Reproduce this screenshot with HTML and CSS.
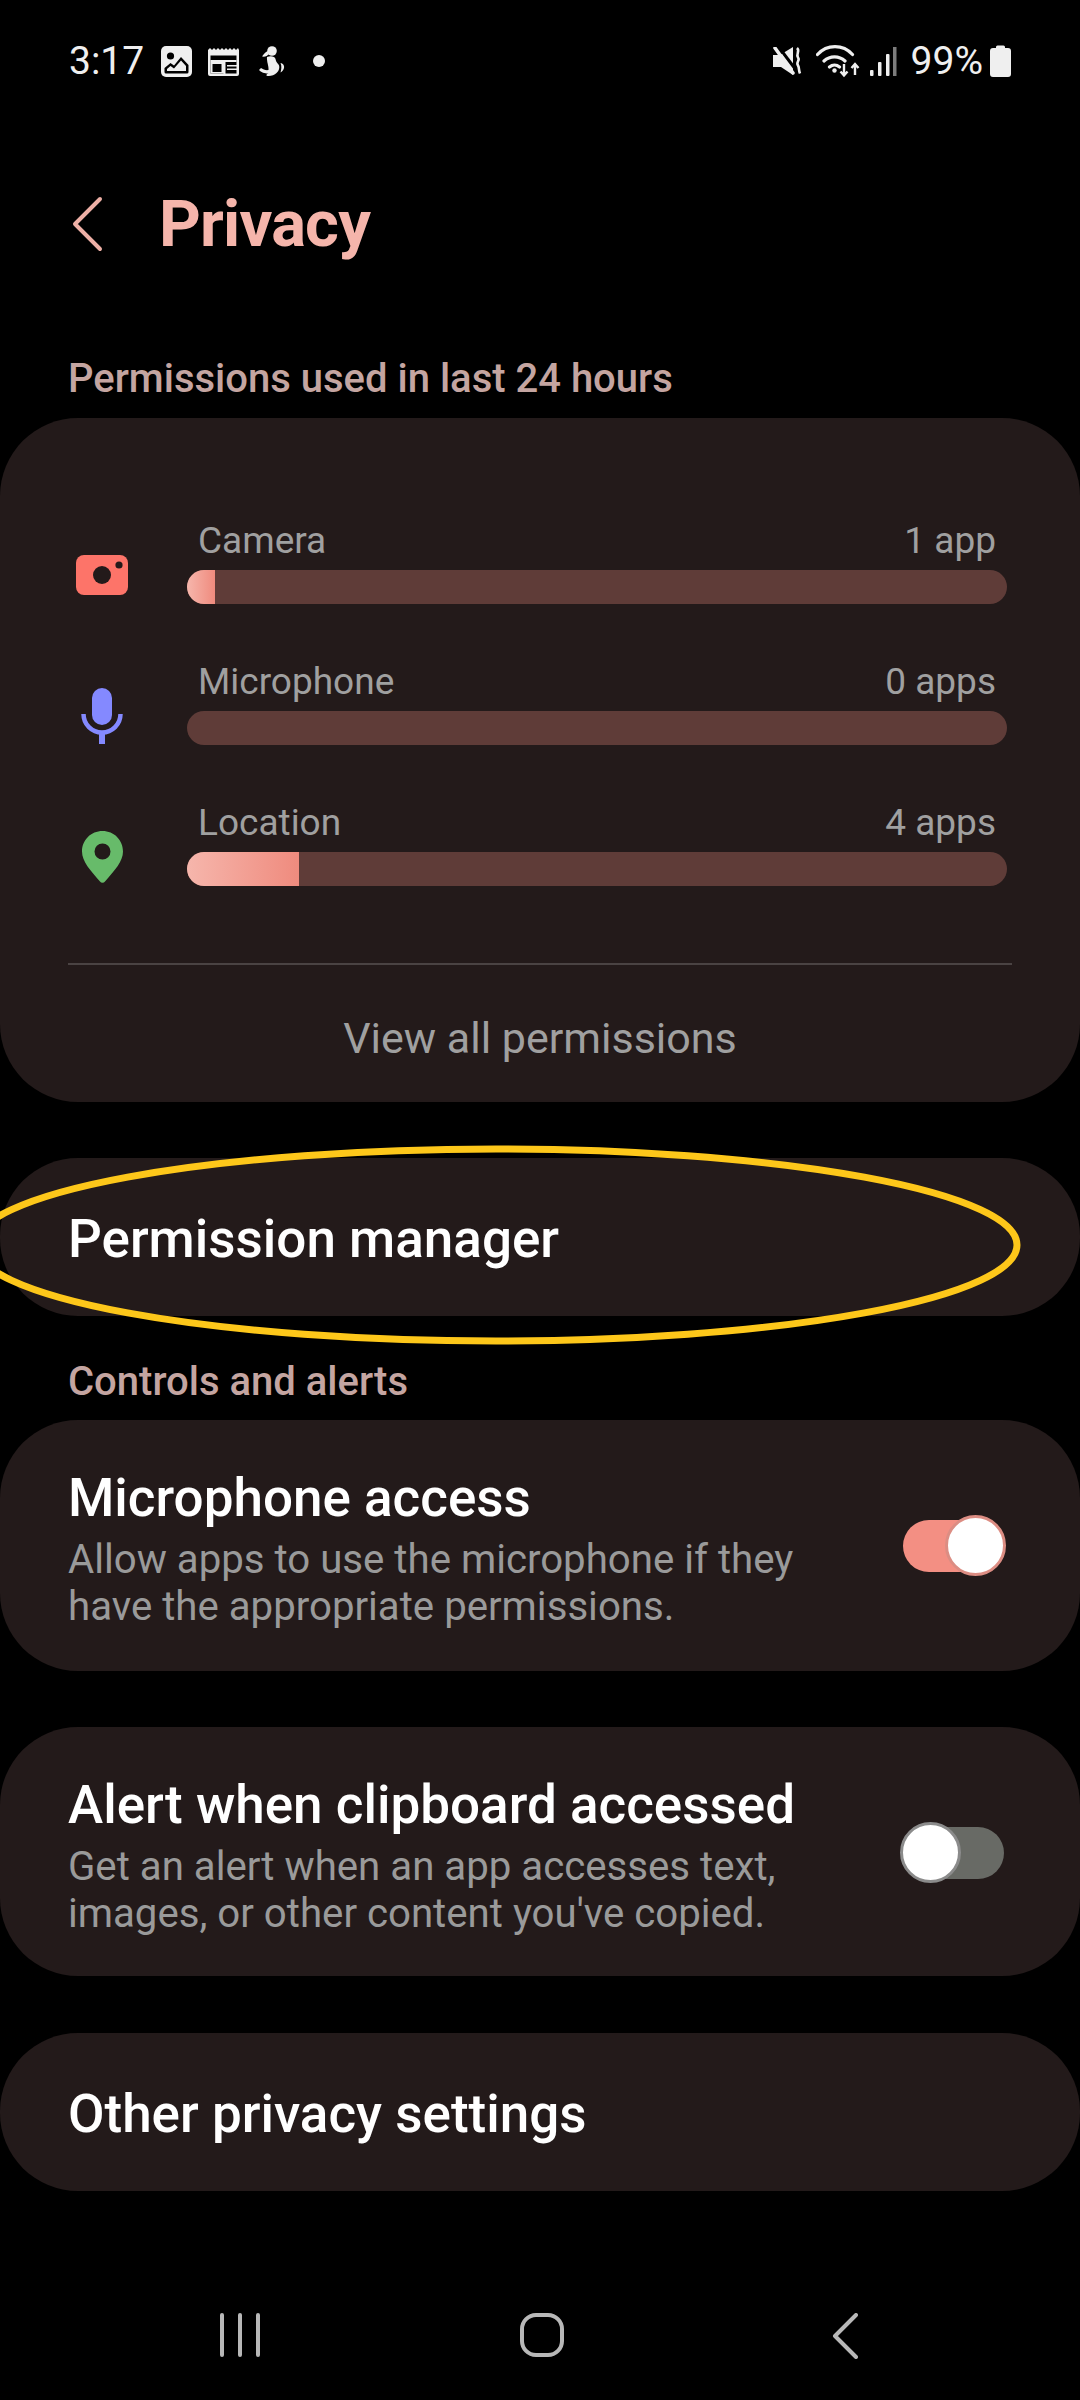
FILE: index.html
```
<!DOCTYPE html>
<html lang="en">
<head>
<meta charset="utf-8">
<title>Privacy</title>
<link rel="stylesheet" href="styles.css">
</head>
<body>
<div class="page">
  <div class="status">
    <div class="status-left">
      <span class="time">3:17</span>
      <svg class="ic-img" viewBox="0 0 31 31"><rect width="31" height="31" rx="5" fill="#efefef"/><circle cx="9.500" cy="10" r="3.600" fill="#000"/><path d="M3.500 26v-4l6-5 3.500 2.500L20 11l7.500 8v7a1.500 1.500 0 0 1-1.500 1.500H5a1.500 1.500 0 0 1-1.500-1.500Z" fill="#000"/><path d="M6 25v-2l3.500-3 3.500 2.500L20 14.500l5 5.500v5Z" fill="#efefef"/></svg>
      <svg class="ic-cal" viewBox="0 0 33 30"><path d="M1 4l2-2 2 2 2-2 2 2 2-2 2 2 2-2 2 2 2-2 2 2 2-2 2 2 2-2 2 2 2-2 1 2v24a2 2 0 0 1-2 2H3a2 2 0 0 1-2-2Z" fill="#efefef"/><rect x="3.500" y="9.500" width="26" height="18" fill="#000"/><path d="M3.500 14h26v2h-26Z M16.500 14h2v14h-2Z M20 19h10v1.500H20Z M20 22.500h10V24H20Z M3.500 16h13v11.500h-13Z" fill="#efefef"/><rect x="5.500" y="18" width="9" height="8" fill="#000"/></svg>
      <svg class="ic-fig" viewBox="0 0 28 31"><circle cx="15" cy="5" r="4.800" fill="#efefef"/><path d="M11 5C8 6 6.500 8.500 5 10.500c3 .5 5.500-.5 7-2.500Z" fill="#efefef"/><path d="M10 11c3-1.500 8-1 8.500 2 .5 2 .5 3 3 5.500 1.500 2 1 6-2 8.500-2 2-6 3.500-9 3-2-.5-1-2 1-2.500-2 0-6 0-9.500-3.500l2-2c2 1.500 5 2.500 7.500 2 .5-4-2-8-1.500-13.500Z" fill="#efefef"/><path d="M23.500 17c3 .5 4 3 3.500 5-.5 2-2 4-3.500 4.500.8-3 1.500-6 0-9.500Z" fill="#efefef"/></svg>
      <span class="dot"></span>
    </div>
    <div class="status-right">
      <svg class="ic-mute" viewBox="0 0 30 29"><path d="M1 8h7L21 0v28L9 20H1Z" fill="#efefef"/><path d="M6-1l18 24" stroke="#000" stroke-width="3" fill="none"/><path d="M3 1l18 25" stroke="#efefef" stroke-width="3.500" stroke-linecap="round" fill="none"/><path d="M25 1c3.500 3-1.500 6 1 9.500 2.500 3-2.500 4.500 0 8 1.500 2.500.5 5 2 8" fill="none" stroke="#efefef" stroke-width="2.600"/></svg>
      <svg class="ic-wifi" viewBox="0 0 46 33"><path d="M1.500 9.500C11-1 27-1 36.500 9.500M8 16c6-5.500 15-5.500 21 0M13.500 22c3-2.500 7-2.500 10 0" fill="none" stroke="#efefef" stroke-width="3.200" stroke-linecap="round"/><circle cx="18.500" cy="25.500" r="2.200" fill="#efefef"/><path d="M28 19v11M24.500 26.500l3.500 4 3.500-4M39 30V19M35.500 23l3.500-4 3.500 4" fill="none" stroke="#efefef" stroke-width="2.400"/></svg>
      <svg class="ic-sig" viewBox="0 0 27 29"><rect x="0" y="23" width="3.500" height="6" rx="1" fill="#efefef"/><rect x="8" y="15" width="3.500" height="14" rx="1" fill="#efefef"/><rect x="16" y="7" width="3.500" height="22" rx="1" fill="#efefef"/><rect x="23" y="0" width="3.500" height="29" fill="#7c7c7c"/></svg>
      <span class="pct">99%</span>
      <svg class="ic-bat" viewBox="0 0 21 32"><path d="M6 2a1.500 1.500 0 0 1 1.500-1.500h6A1.500 1.500 0 0 1 15 2v1h3a3 3 0 0 1 3 3v23a3 3 0 0 1-3 3H3a3 3 0 0 1-3-3V6a3 3 0 0 1 3-3h3Z" fill="#efefef"/></svg>
    </div>
  </div>

  <header class="header">
    <svg class="back" viewBox="0 0 32 56"><path d="M28 3L3 28l25 25" fill="none" stroke="#eeb0a6" stroke-width="4" stroke-linecap="round" stroke-linejoin="round"/></svg>
    <h1 class="title">Privacy</h1>
  </header>

  <h2 class="section first">Permissions used in last 24 hours</h2>

  <section class="card usage">
    <div class="rows">
      <div class="row">
        <div class="row-icon">
          <svg class="ic-camera" viewBox="0 0 52 40"><rect width="52" height="40" rx="8" fill="#fd7469"/><circle cx="26" cy="20" r="9" fill="#231a1a"/><circle cx="43" cy="10" r="3.600" fill="#231a1a"/></svg>
        </div>
        <div class="row-body">
          <div class="labels"><span>Camera</span><span>1 app</span></div>
          <div class="bar"><div class="fill fill-camera"></div></div>
        </div>
      </div>
      <div class="row">
        <div class="row-icon">
          <svg class="ic-mic" viewBox="0 0 42 56"><rect x="11" y="0" width="20" height="37" rx="10" fill="#8489ff"/><path d="M2.500 26a18.500 18.500 0 0 0 37 0" fill="none" stroke="#8489ff" stroke-width="4.500"/><rect x="18" y="44" width="6" height="12" fill="#8489ff"/></svg>
        </div>
        <div class="row-body">
          <div class="labels"><span>Microphone</span><span>0 apps</span></div>
          <div class="bar"></div>
        </div>
      </div>
      <div class="row">
        <div class="row-icon">
          <svg class="ic-pin" viewBox="0 0 41 52"><path fill-rule="evenodd" d="M20.500 0C32 0 41 9 41 20.500c0 10-8.500 19-18 30a3 3 0 0 1-5 0C8.500 39.500 0 30.500 0 20.500 0 9 9 0 20.500 0Zm0 12.500a8 8 0 1 0 0 16 8 8 0 0 0 0-16Z" fill="#67bb6a"/></svg>
        </div>
        <div class="row-body">
          <div class="labels"><span>Location</span><span>4 apps</span></div>
          <div class="bar"><div class="fill fill-location"></div></div>
        </div>
      </div>
    </div>
    <div class="divider"></div>
    <div class="view-all">View all permissions</div>
  </section>

  <section class="card plain pm"><span class="item">Permission manager</span></section>

  <h2 class="section second">Controls and alerts</h2>

  <section class="card toggle-card">
    <div class="toggle-text">
      <div class="item">Microphone access</div>
      <p class="sub">Allow apps to use the microphone if they have the appropriate permissions.</p>
    </div>
    <div class="switch on"><span class="knob"></span></div>
  </section>

  <section class="card toggle-card next">
    <div class="toggle-text">
      <div class="item">Alert when clipboard accessed</div>
      <p class="sub">Get an alert when an app accesses text, images, or other content you've copied.</p>
    </div>
    <div class="switch off"><span class="knob"></span></div>
  </section>

  <section class="card plain last"><span class="item">Other privacy settings</span></section>

  <nav class="nav">
    <svg class="nav-recent" viewBox="0 0 42 44"><path d="M2 2v40M20 2v40M38 2v40" stroke="#b8b8b8" stroke-width="4" stroke-linecap="round" fill="none"/></svg>
    <svg class="nav-home" viewBox="0 0 44 44"><rect x="2" y="2" width="40" height="40" rx="14" fill="none" stroke="#b8b8b8" stroke-width="4"/></svg>
    <svg class="nav-back" viewBox="0 0 26 46"><path d="M24 2L3 23l21 21" fill="none" stroke="#b8b8b8" stroke-width="4" stroke-linecap="round" stroke-linejoin="round"/></svg>
  </nav>

  <svg class="circle" viewBox="0 0 1080 300"><ellipse cx="496" cy="145" rx="521" ry="96" fill="none" stroke="#fdc71a" stroke-width="7"/></svg>
</div>
</body>
</html>
```

FILE: styles.css
```
* { box-sizing: border-box; }
html, body { margin: 0; padding: 0; background: #000; }
.page {
  position: relative;
  width: 1080px;
  height: 2400px;
  overflow: hidden;
  background: #000;
  font-family: Roboto, "Noto Sans", sans-serif;
  display: flex;
  flex-direction: column;
}
.status {
  height: 122px;
  padding: 0 69px 0 69px;
  display: flex;
  justify-content: space-between;
  align-items: center;
  color: #efefef;
}
.status-left, .status-right { display: flex; align-items: center; }
.time { font-size: 39px; width: 92px; }
.ic-img { width: 31px; height: 31px; margin-right: 15px; }
.ic-cal { width: 33px; height: 30px; margin-right: 17px; }
.ic-fig { width: 28px; height: 31px; margin-right: 28px; }
.dot { width: 12px; height: 12px; border-radius: 50%; background: #efefef; }
.ic-mute { width: 30px; height: 29px; margin-right: 14px; }
.ic-wifi { width: 46px; height: 33px; margin-right: 8px; }
.ic-sig { width: 27px; height: 29px; margin-right: 14px; }
.pct { font-size: 39px; margin-right: 7px; }
.ic-bat { width: 21px; height: 32px; }

.header {
  height: 204px;
  display: flex;
  align-items: center;
  padding-left: 72px;
}
.back { width: 32px; height: 56px; margin-right: 55px; }
.title { margin: 0; font-size: 65px; font-weight: 700; color: #f5b5ab; letter-spacing: -0.8px; }

.section {
  margin: 0;
  padding-left: 68px;
  font-size: 40px;
  line-height: 40px;
  font-weight: 500;
  color: #c4a5a1;
}
.section.first { padding-top: 33px; padding-bottom: 19px; }
.section.second { padding-top: 46px; padding-bottom: 18px; }

.card { background: #231a1a; border-radius: 78px; }
.usage { height: 684px; padding-top: 104px; }
.rows { display: flex; flex-direction: column; gap: 59px; }
.row { display: flex; height: 82px; }
.row-icon {
  width: 187px;
  padding: 33px 13px 0 30px;
  display: flex;
  justify-content: center;
  align-items: flex-start;
}
.row-body { width: 820px; display: flex; flex-direction: column; justify-content: flex-end; }
.labels {
  display: flex;
  justify-content: space-between;
  padding: 0 11px;
  font-size: 37px;
  line-height: 40px;
  color: #a0a0a0;
  margin-bottom: 9px;
}
.bar { height: 34px; border-radius: 17px; background: #5f3c38; overflow: hidden; flex: none; }
.fill { height: 100%; background: linear-gradient(90deg, #f6b6ac, #ef8b7e); }
.fill-camera { width: 28px; }
.fill-location { width: 112px; }
.ic-camera { width: 52px; height: 40px; }
.ic-mic { width: 42px; height: 56px; margin-top: -8px; }
.ic-pin { width: 41px; height: 52px; margin-top: -6px; }

.divider { height: 2px; background: #4a4343; margin: 77px 68px 0 68px; }
.view-all { text-align: center; font-size: 43px; line-height: 50px; color: #a0a0a0; margin-top: 48px; }

.plain { height: 158px; display: flex; align-items: center; padding: 3px 0 0 68px; }
.pm { margin-top: 56px; }
.last { margin-top: 57px; }
.item { font-size: 53px; line-height: 56px; color: #fff; font-weight: 500; }

.toggle-card {
  height: 251px;
  padding: 50px 0 0 68px;
  display: flex;
  justify-content: space-between;
  align-items: flex-start;
}
.next { margin-top: 56px; height: 249px; }
.toggle-text { width: 780px; }
.sub { margin: 10px 0 0; font-size: 40.2px; line-height: 47px; color: #9a9a9a; width: 760px; }

.switch { position: relative; width: 101px; height: 52px; border-radius: 26px; margin-right: 76px; margin-top: 50px; }
.switch.on { background: #f38f83; }
.switch.off { background: #686a65; }
.knob { position: absolute; top: -5px; width: 61px; height: 61px; border-radius: 50%; background: #fff; }
.on .knob { right: -2px; border: 3px solid #dc8d83; }
.off .knob { left: -3px; border: 3px solid #8b8b8b; }

.nav {
  margin-top: auto;
  height: 130px;
  display: flex;
  justify-content: space-between;
  align-items: flex-start;
  padding: 43px 222px 0 220px;
}
.nav-recent { width: 42px; height: 44px; }
.nav-home { width: 44px; height: 44px; margin-right: 11px; }
.nav-back { width: 26px; height: 46px; }

.circle { position: absolute; left: 0; top: 1100px; width: 1080px; height: 300px; }
```
